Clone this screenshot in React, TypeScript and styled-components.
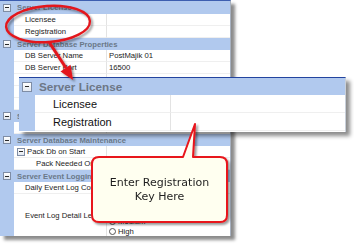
import React from "react";
import styled, { createGlobalStyle } from "styled-components";

const GlobalStyle = createGlobalStyle`
  html, body {
    margin: 0;
    padding: 0;
    background: #fff;
  }
  body {
    font-family: "Liberation Sans", Arial, sans-serif;
  }
`;

const Stage = styled.div`
  position: relative;
  width: 354px;
  height: 244px;
  overflow: hidden;
  background: #fff;
`;

const Grid = styled.div`
  width: 231px;
  height: 236px;
  box-sizing: border-box;
  display: flex;
  flex-direction: column;
  border-top: 1px solid #3d5eb0;
  border-right: 1px solid #a7b1c0;
  background: #fff;
  box-shadow: 4px 4px 3px rgba(0, 0, 0, 0.45);
  font-size: 7.7px;
  color: #1b1b1b;
  overflow: hidden;
`;

const Row = styled.div<{ $h?: number }>`
  flex: none;
  display: grid;
  grid-template-columns: 14px 93px 1fr;
  height: ${(p) => p.$h ?? 12}px;
`;

const Gutter = styled.div`
  background: #b1c9ee;
`;

const NameCell = styled.div<{ $indent?: number }>`
  display: flex;
  align-items: center;
  gap: 2px;
  padding-left: ${(p) => p.$indent ?? 11}px;
  border-right: 1px solid #e3e3e3;
  border-bottom: 1px solid #efefef;
  white-space: nowrap;
  overflow: hidden;
`;

const ValueCell = styled.div`
  display: flex;
  align-items: center;
  padding-left: 2px;
  border-bottom: 1px solid #efefef;
  white-space: nowrap;
  overflow: hidden;
`;

const HeaderRow = styled.div<{ $h?: number }>`
  flex: none;
  display: flex;
  align-items: center;
  height: ${(p) => p.$h ?? 12}px;
  background: #b1c9ee;
  font-weight: bold;
  color: #6a7888;
  white-space: nowrap;
`;

const ToggleSlot = styled.div<{ $w: number }>`
  width: ${(p) => p.$w}px;
  flex: none;
  display: flex;
  justify-content: center;
`;

const Toggle = styled.span<{ $size: number }>`
  width: ${(p) => p.$size}px;
  height: ${(p) => p.$size}px;
  flex: none;
  box-sizing: border-box;
  display: inline-flex;
  align-items: center;
  justify-content: center;
  border: 1px solid #7f8da5;
  background: linear-gradient(#ffffff, #e3e8f0);
  &::after {
    content: "";
    width: 55%;
    height: 1px;
    background: #2a2a2a;
  }
`;

const HeaderText = styled.span<{ $pad: number }>`
  padding-left: ${(p) => p.$pad}px;
`;

const RadioList = styled.div`
  display: flex;
  flex-direction: column;
  justify-content: space-between;
  padding: 2px 0 1px 2px;
`;

const Radio = styled.div`
  display: flex;
  align-items: center;
  gap: 2px;
  height: 10px;
  &::before {
    content: "";
    width: 7px;
    height: 7px;
    box-sizing: border-box;
    border: 1px solid #555;
    border-radius: 50%;
    background: #fff;
  }
`;

/* magnified copy of the "Server License" category */
const Zoom = styled.div`
  position: absolute;
  left: 19px;
  top: 77px;
  width: 327px;
  height: 55px;
  box-sizing: border-box;
  display: flex;
  flex-direction: column;
  border-top: 1px solid #23449f;
  border-right: 1px solid #c9d0da;
  background: #fff;
  box-shadow: 4px 4px 4px rgba(0, 0, 0, 0.45);
  font-size: 11px;
  color: #111;
  z-index: 2;
`;

const ZoomHeader = styled(HeaderRow)`
  font-size: 11.7px;
  color: #6d7786;
`;

const ZoomRow = styled(Row)`
  grid-template-columns: 16px 136px 1fr;
`;

const Annotations = styled.svg`
  position: absolute;
  left: 0;
  top: 0;
  z-index: 3;
  overflow: visible;
  pointer-events: none;
`;

const CalloutText = styled.div`
  position: absolute;
  left: 92px;
  top: 157px;
  width: 135px;
  height: 65px;
  z-index: 4;
  display: flex;
  align-items: center;
  justify-content: center;
  text-align: center;
  font-family: "DejaVu Sans", Verdana, sans-serif;
  font-size: 11px;
  line-height: 14px;
  color: #1e1e1e;
`;

type Prop = { name: string; value?: string; indent?: number; toggle?: boolean };

const PropRow = ({ name, value, indent, toggle }: Prop) => (
  <Row>
    <Gutter />
    <NameCell $indent={indent}>
      {toggle && <Toggle $size={8} />}
      {name}
    </NameCell>
    <ValueCell>{value}</ValueCell>
  </Row>
);

const Category = ({ title, h }: { title: string; h?: number }) => (
  <HeaderRow $h={h}>
    <ToggleSlot $w={14}>
      <Toggle $size={8} />
    </ToggleSlot>
    <HeaderText $pad={3}>{title}</HeaderText>
  </HeaderRow>
);

const App = () => {
  return (
    <>
      <GlobalStyle />
      <Stage>
        <Grid>
          <Category title="Server License" h={13} />
          <PropRow name="Licensee" />
          <PropRow name="Registration" />
          <Category title="Server Database Properties" />
          <PropRow name="DB Server Name" value="PostMajik 01" />
          <PropRow name="DB Server Port" value="16500" />
          <PropRow name="DB User Name" value="sa" />
          <PropRow name="DB Password" value="*****" />
          <PropRow name="DB Name" value="PostMajik" />
          <Category title="Server History" />
          <PropRow name="Keep History (days)" value="30" />
          <Category title="Server Database Maintenance" />
          <PropRow name="Pack Db on Start" indent={3} toggle />
          <PropRow name="Pack Needed On Start" indent={22} value="True" />
          <Category title="Server Event Logging" />
          <PropRow name="Daily Event Log Count" value="7" />
          <Row $h={42}>
            <Gutter />
            <NameCell>Event Log Detail Level</NameCell>
            <RadioList>
              <Radio>None</Radio>
              <Radio>Low</Radio>
              <Radio>Medium</Radio>
              <Radio>High</Radio>
            </RadioList>
          </Row>
        </Grid>

        <Zoom>
          <ZoomHeader $h={17}>
            <ToggleSlot $w={16}>
              <Toggle $size={10} />
            </ToggleSlot>
            <HeaderText $pad={4}>Server License</HeaderText>
          </ZoomHeader>
          <ZoomRow $h={18}>
            <Gutter />
            <NameCell $indent={18}>Licensee</NameCell>
            <ValueCell />
          </ZoomRow>
          <ZoomRow $h={18}>
            <Gutter />
            <NameCell $indent={18}>Registration</NameCell>
            <ValueCell />
          </ZoomRow>
        </Zoom>

        <Annotations width="354" height="244" viewBox="0 0 354 244">
          <defs>
            <filter id="shade" x="-20%" y="-20%" width="140%" height="140%">
              <feDropShadow dx="2" dy="2" stdDeviation="1.2" floodColor="#000" floodOpacity="0.4" />
            </filter>
          </defs>
          <g filter="url(#shade)">
            <ellipse
              cx="48"
              cy="24"
              rx="42"
              ry="18"
              transform="rotate(-4 48 24)"
              fill="none"
              stroke="#e3151b"
              strokeWidth="2.4"
            />
            <line x1="49" y1="42" x2="66" y2="68" stroke="#e3151b" strokeWidth="3" />
            <polygon points="73,80 60.5,71.5 70.5,64.8" fill="#e3151b" />
            <path
              d="M 99 157 H 183 L 195 124 L 193 157 H 220 Q 227 157 227 164 V 215 Q 227 222 220 222 H 99 Q 92 222 92 215 V 164 Q 92 157 99 157 Z"
              fill="#fffff0"
              stroke="#e8141b"
              strokeWidth="2"
              strokeLinejoin="round"
            />
          </g>
        </Annotations>
        <CalloutText>
          Enter Registration
          <br />
          Key Here
        </CalloutText>
      </Stage>
    </>
  );
};

export default App;
